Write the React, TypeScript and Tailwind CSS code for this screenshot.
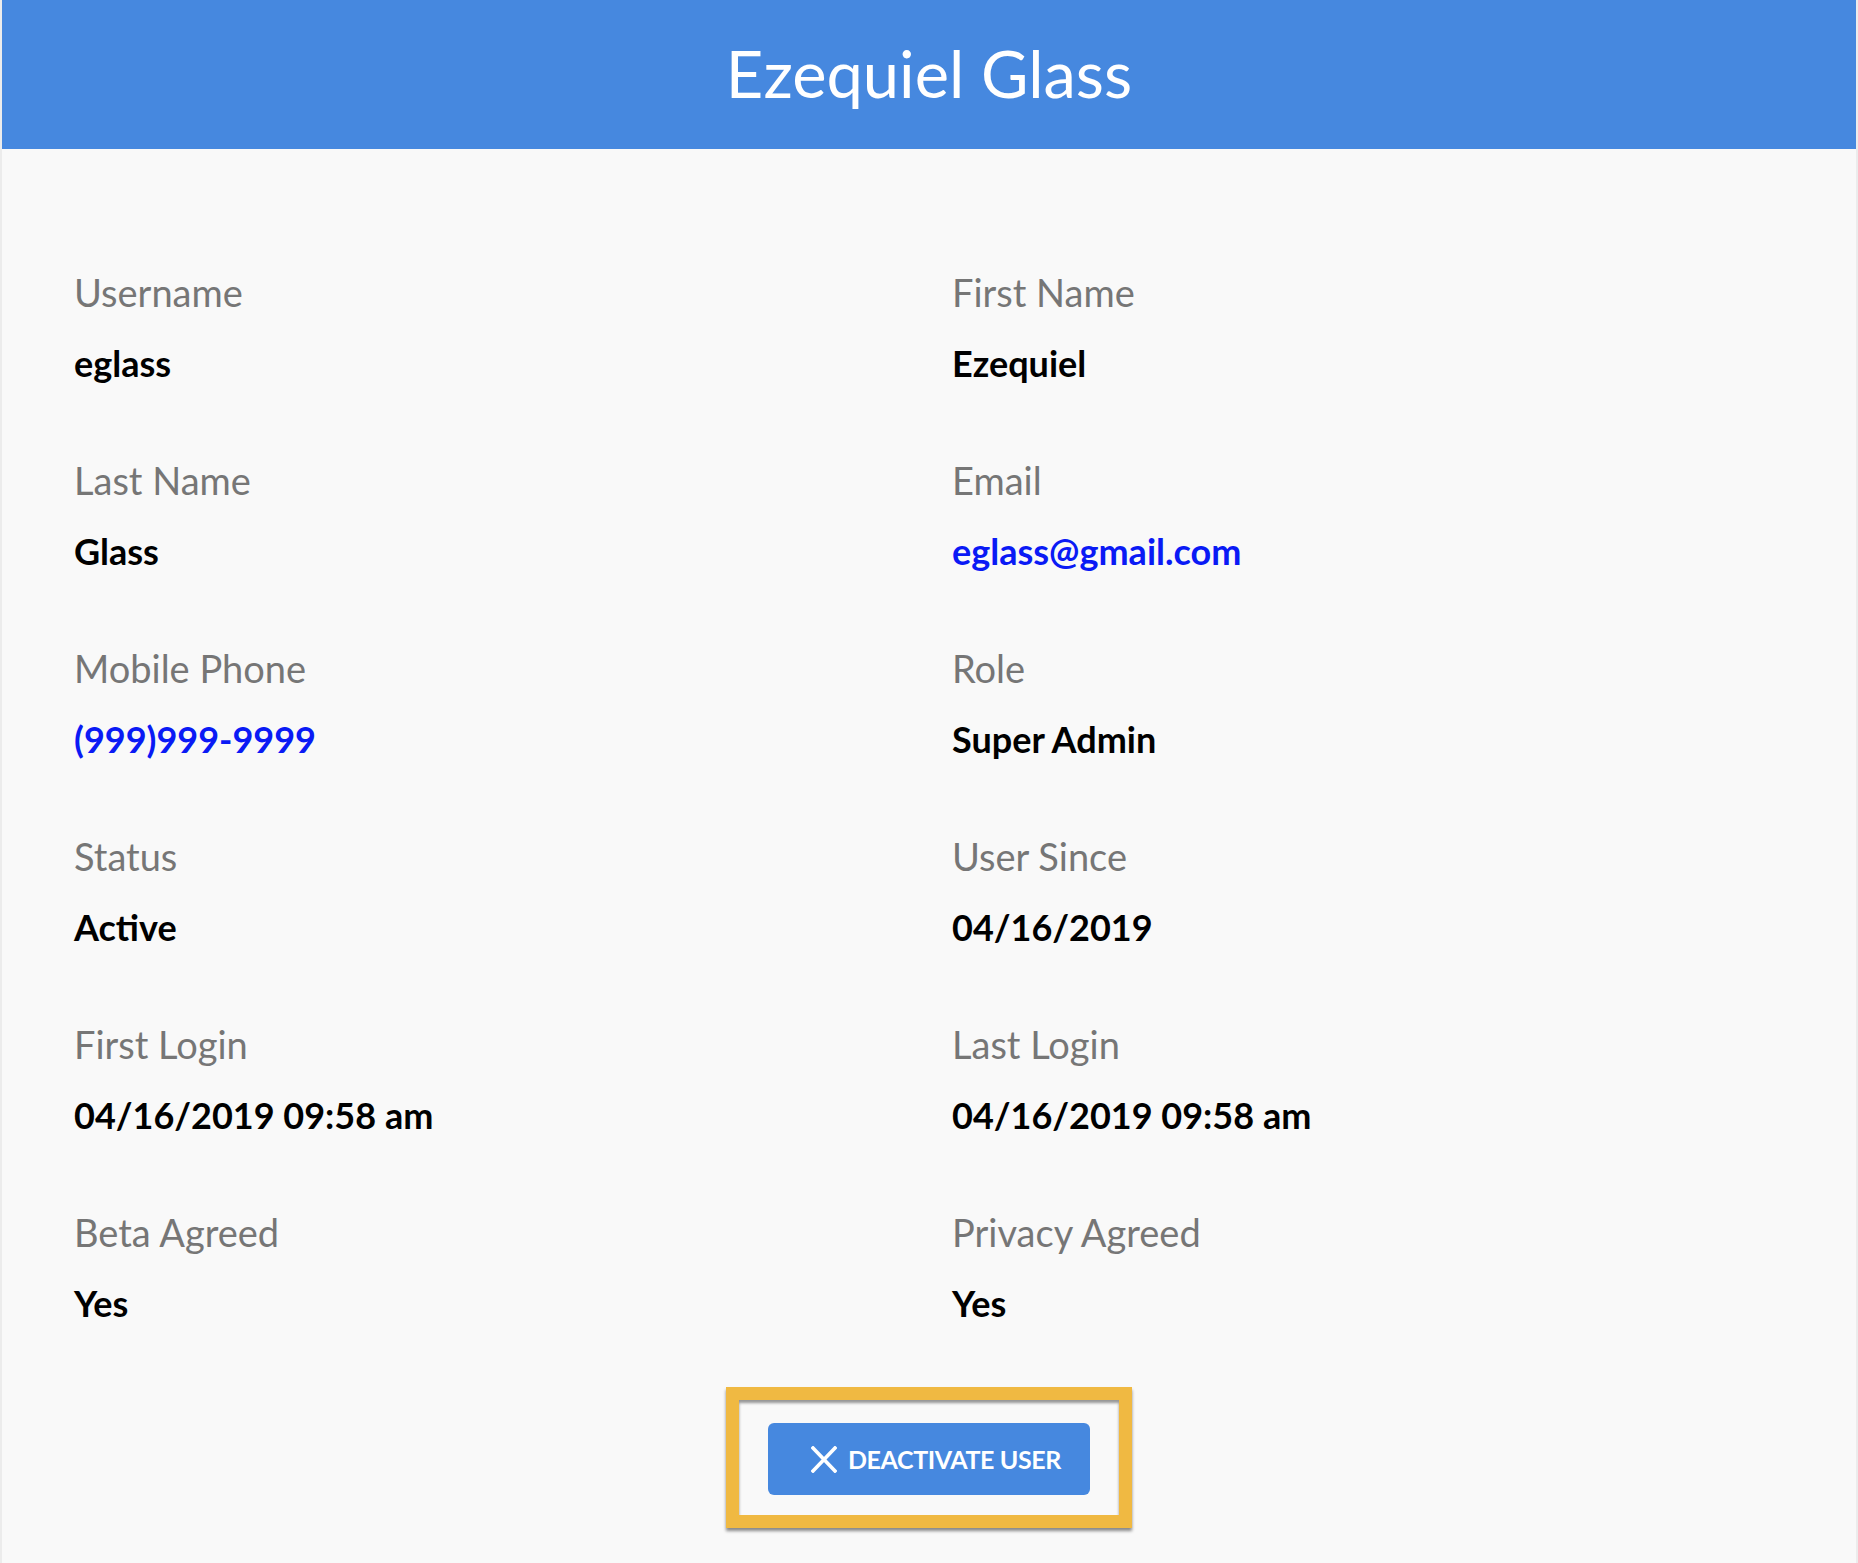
const fields: { label: string; value: string; link?: boolean }[] = [
  { label: "Username", value: "eglass" },
  { label: "First Name", value: "Ezequiel" },
  { label: "Last Name", value: "Glass" },
  { label: "Email", value: "eglass@gmail.com", link: true },
  { label: "Mobile Phone", value: "(999)999-9999", link: true },
  { label: "Role", value: "Super Admin" },
  { label: "Status", value: "Active" },
  { label: "User Since", value: "04/16/2019" },
  { label: "First Login", value: "04/16/2019 09:58 am" },
  { label: "Last Login", value: "04/16/2019 09:58 am" },
  { label: "Beta Agreed", value: "Yes" },
  { label: "Privacy Agreed", value: "Yes" },
]

export default function App() {
  return (
    <div className="min-h-[1563px] bg-[#ececec] px-[2px] font-['Lato',sans-serif]">
      <div className="min-h-[1563px] bg-[#f9f9f9]">
        <header className="flex h-[149px] items-start justify-center bg-[#4688df] pt-[34px]">
          <h1 className="text-[65px] leading-[78px] font-normal text-white">Ezequiel Glass</h1>
        </header>

        <main className="px-[72px] pt-[119px]">
          <div className="grid grid-cols-2 gap-x-[46px] gap-y-[71px]">
            {fields.map((field) => (
              <div key={field.label}>
                <div className="text-[38px] leading-[48px] text-[#767676]">{field.label}</div>
                <div
                  className={
                    field.link
                      ? "mt-[25px] text-[36px] leading-[44px] font-bold text-[#0a1af5]"
                      : "mt-[25px] text-[36px] leading-[44px] font-bold text-black"
                  }
                >
                  {field.value}
                </div>
              </div>
            ))}
          </div>

          <div className="mt-[62px] flex justify-center">
            <div className="border-[13px] border-[#f0b942] px-[29px] pt-[23px] pb-[20px] shadow-[0_3px_3px_rgba(0,0,0,0.45),inset_0_3px_3px_rgba(0,0,0,0.4)]">
              <button
                className="flex h-[72px] w-[322px] items-center rounded-[6px] bg-[#4688df] pl-[43px] text-white"
                type="button"
              >
                <svg width="26" height="27" viewBox="0 0 26 27" className="shrink-0">
                  <path d="M2 2L24 25M24 2L2 25" stroke="white" strokeWidth="3.6" strokeLinecap="square" />
                </svg>
                <span className="ml-[11px] text-[25px] leading-none font-bold tracking-[-0.4px]">
                  DEACTIVATE USER
                </span>
              </button>
            </div>
          </div>
        </main>
      </div>
    </div>
  )
}
